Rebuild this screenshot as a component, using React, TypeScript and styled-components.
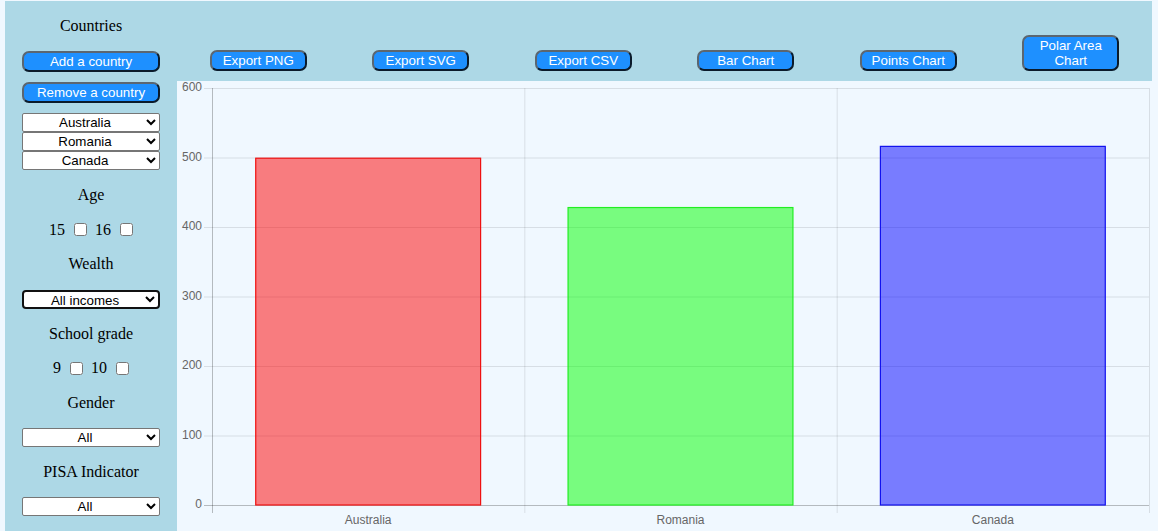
import React from "react";
import styled, { createGlobalStyle } from "styled-components";

const GlobalStyle = createGlobalStyle`
  html, body {
    margin: 0;
    padding: 0;
    background: #f0f8ff;
    overflow: hidden;
  }
`;

// Page frame
const Page = styled.div`
  display: grid;
  grid-template-columns: 172px 1fr;
  height: 100vh;
  padding: 1px 6px 0 5px;
  box-sizing: border-box;
  font-family: "Liberation Serif", "Times New Roman", serif;
`;

const Sidebar = styled.aside`
  display: flex;
  flex-direction: column;
  align-items: center;
  background: #add8e6;
  padding-top: 7px;
  color: #000;
`;

const Main = styled.main`
  display: flex;
  flex-direction: column;
  min-width: 0;
`;

const Toolbar = styled.div`
  display: flex;
  justify-content: space-around;
  align-items: flex-end;
  height: 80px;
  padding-bottom: 10px;
  box-sizing: border-box;
  background: #add8e6;
`;

const ChartPanel = styled.section`
  flex: 1;
  background: #f0f8ff;
`;

const ChartSvg = styled.svg`
  display: block;
  font-family: "Liberation Sans", Arial, sans-serif;
`;

// Sidebar parts
const Slot = styled.div<{ $h?: number }>`
  display: flex;
  align-items: center;
  justify-content: center;
  height: ${(p) => p.$h ?? 34.6}px;
  font-size: 16px;
`;

const BlueButton = styled.button<{ $w: number; $mt?: number }>`
  width: ${(p) => p.$w}px;
  min-height: 21px;
  margin-top: ${(p) => p.$mt ?? 0}px;
  padding: 1px 4px;
  box-sizing: border-box;
  background: #1e90ff;
  color: #fff;
  font-family: "Liberation Sans", Arial, sans-serif;
  font-size: 13.33px;
  line-height: 15px;
  border: 2px solid;
  border-color: #5b6670 #0b1b2b #0b1b2b #5b6670;
  border-radius: 7px;
  cursor: pointer;
`;

const SelectStack = styled.div`
  display: flex;
  flex-direction: column;
  margin-top: 10px;
  margin-bottom: 8px;
`;

const Picker = styled.select<{ $focused?: boolean }>`
  width: 138px;
  height: 19px;
  box-sizing: border-box;
  padding: 0 2px;
  background: #fff;
  color: #000;
  font-family: "Liberation Sans", Arial, sans-serif;
  font-size: 13.33px;
  text-align: center;
  text-align-last: center;
  border: ${(p) => (p.$focused ? "2px solid #111" : "1px solid #767676")};
  border-radius: ${(p) => (p.$focused ? 4 : 2)}px;
`;

const CheckLabel = styled.label`
  display: inline-flex;
  align-items: center;
  margin: 0 4px;
`;

const Check = styled.input`
  width: 13px;
  height: 13px;
  margin: 0 0 0 9px;
`;

const countries = ["Australia", "Romania", "Canada"];

const bars = [
  { label: "Australia", value: 499, fill: "rgba(255,0,0,0.5)", stroke: "#ee1111" },
  { label: "Romania", value: 428, fill: "rgba(0,255,0,0.5)", stroke: "#22ee22" },
  { label: "Canada", value: 516, fill: "rgba(0,0,255,0.5)", stroke: "#1111ee" },
];

const toolButtons = [
  "Export PNG",
  "Export SVG",
  "Export CSV",
  "Bar Chart",
  "Points Chart",
  "Polar Area Chart",
];

const BarChart: React.FC = () => {
  const W = 975;
  const H = 450;
  const left = 35;
  const right = 972;
  const top = 7;
  const bottom = 424;
  const max = 600;
  const catW = (right - left) / bars.length;
  const barW = catW * 0.72;
  const y = (v: number) => bottom - (v / max) * (bottom - top);
  const grid = "rgba(0,0,0,0.1)";
  const axis = "rgba(0,0,0,0.25)";

  return (
    <ChartSvg width={W} height={H} viewBox={`0 0 ${W} ${H}`}>
      {/* horizontal grid + y ticks */}
      {[0, 100, 200, 300, 400, 500, 600].map((t) => (
        <g key={t}>
          <line
            x1={left - 8}
            x2={right}
            y1={y(t) + 0.5}
            y2={y(t) + 0.5}
            stroke={t === 0 ? axis : grid}
          />
          <text
            x={left - 10}
            y={y(t)}
            fontSize={12}
            fill="#666"
            textAnchor="end"
            dominantBaseline="middle"
          >
            {t}
          </text>
        </g>
      ))}
      {/* vertical grid */}
      {[0, 1, 2, 3].map((i) => (
        <line
          key={i}
          x1={left + i * catW + 0.5}
          x2={left + i * catW + 0.5}
          y1={top}
          y2={bottom + 8}
          stroke={i === 0 ? axis : grid}
        />
      ))}
      {bars.map((b, i) => {
        const x = left + i * catW + (catW - barW) / 2;
        return (
          <g key={b.label}>
            <rect
              x={x}
              y={y(b.value)}
              width={barW}
              height={bottom - y(b.value)}
              fill={b.fill}
              stroke={b.stroke}
              strokeWidth={1.2}
            />
            <text
              x={left + i * catW + catW / 2}
              y={440}
              fontSize={12}
              fill="#666"
              textAnchor="middle"
              dominantBaseline="middle"
            >
              {b.label}
            </text>
          </g>
        );
      })}
    </ChartSvg>
  );
};

const App: React.FC = () => {
  return (
    <>
      <GlobalStyle />
      <Page>
        <Sidebar>
          <Slot $h={35}>Countries</Slot>
          <BlueButton $w={138} $mt={8}>Add a country</BlueButton>
          <BlueButton $w={138} $mt={10}>Remove a country</BlueButton>
          <SelectStack>
            {countries.map((c) => (
              <Picker key={c} defaultValue={c}>
                {countries.map((o) => (
                  <option key={o}>{o}</option>
                ))}
              </Picker>
            ))}
          </SelectStack>
          <Slot>Age</Slot>
          <Slot>
            <CheckLabel>15<Check type="checkbox" /></CheckLabel>
            <CheckLabel>16<Check type="checkbox" /></CheckLabel>
          </Slot>
          <Slot>Wealth</Slot>
          <Slot>
            <Picker $focused defaultValue="All incomes">
              <option>All incomes</option>
            </Picker>
          </Slot>
          <Slot>School grade</Slot>
          <Slot>
            <CheckLabel>9<Check type="checkbox" /></CheckLabel>
            <CheckLabel>10<Check type="checkbox" /></CheckLabel>
          </Slot>
          <Slot>Gender</Slot>
          <Slot>
            <Picker defaultValue="All">
              <option>All</option>
            </Picker>
          </Slot>
          <Slot>PISA Indicator</Slot>
          <Slot>
            <Picker defaultValue="All">
              <option>All</option>
            </Picker>
          </Slot>
        </Sidebar>
        <Main>
          <Toolbar>
            {toolButtons.map((t) => (
              <BlueButton key={t} $w={97}>
                {t}
              </BlueButton>
            ))}
          </Toolbar>
          <ChartPanel>
            <BarChart />
          </ChartPanel>
        </Main>
      </Page>
    </>
  );
};

export default App;
